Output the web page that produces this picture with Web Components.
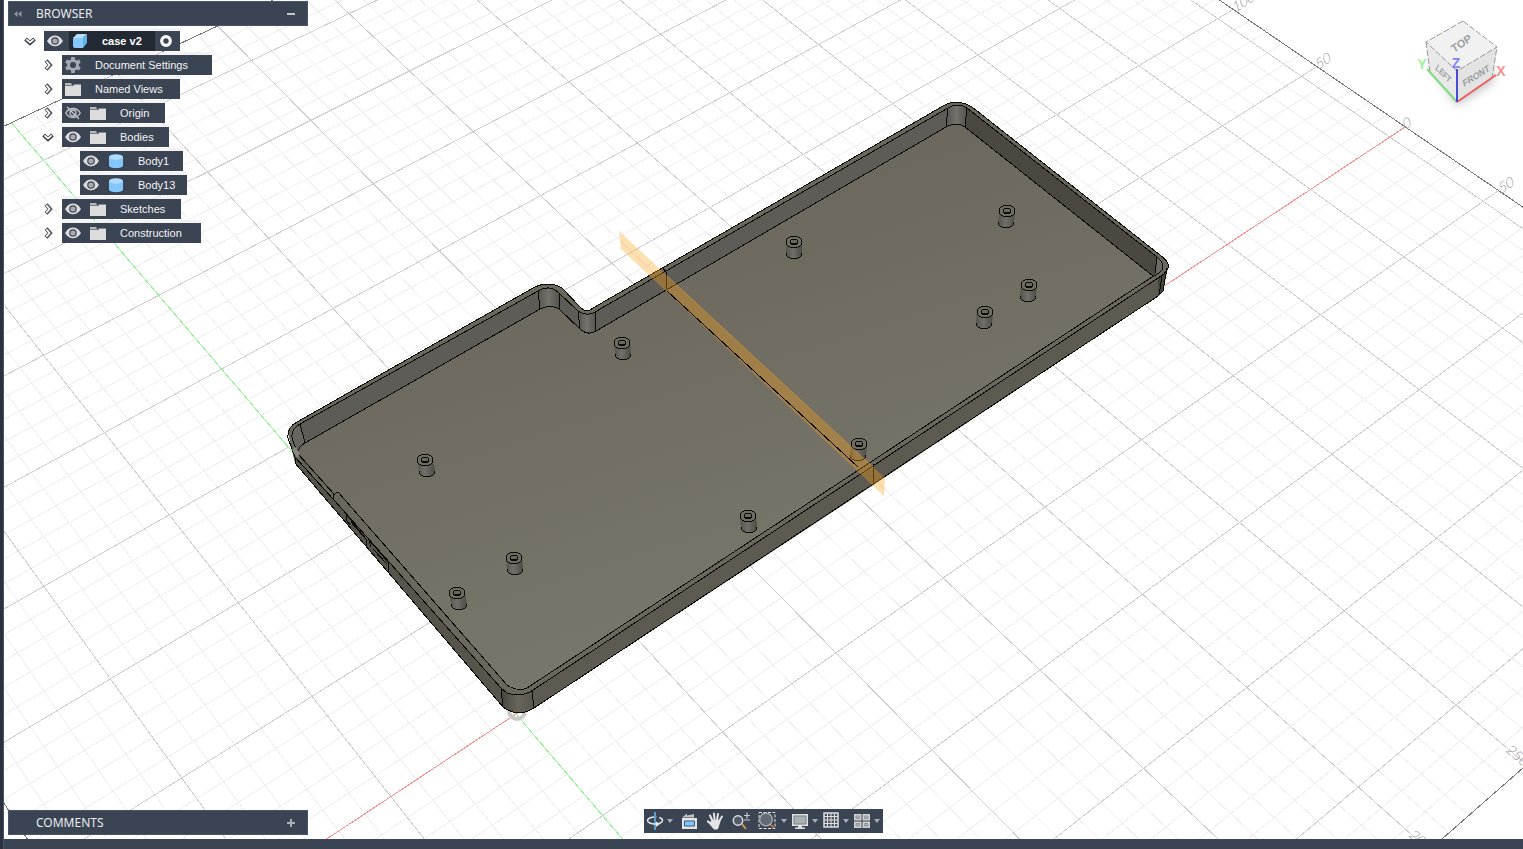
<!DOCTYPE html>
<html lang="en">
<head>
<meta charset="utf-8">
<title>case v2</title>
<style>
html,body{margin:0;height:100%}
body{font-family:"Liberation Sans",Arial,sans-serif;background:#fff;overflow:hidden}
</style>
</head>
<body>
<cad-app></cad-app>
<script>
const define = (name, html, setup) => customElements.define(name, class extends HTMLElement {
  connectedCallback() {
    if (this.shadowRoot) return;
    const t = document.createElement('template');
    t.innerHTML = html;
    this.attachShadow({mode: 'open'}).append(t.content.cloneNode(true));
    if (setup) setup.call(this, this.shadowRoot);
  }
});

/* ---------- icons ---------- */
const ICONS = {
  eye: '<svg width="16" height="16"><path d="M0 8C3 3.2 5.500 2.500 8 2.500S13 3.200 16 8C13 12.500 10.500 13.200 8 13.200S3 12.500 0 8Z" fill="#dcdcdc"/><circle cx="8" cy="8" r="3.800" fill="#3b4453"/><circle cx="8" cy="8" r="2.600" fill="#a9abb0"/></svg>',
  hidden: '<svg width="16" height="16" fill="none" stroke="#c3c6cb" stroke-width="1.300"><path d="M.8 8C4 2 12 2 15.200 8C12 14 4 14 .8 8Z"/><circle cx="8" cy="8" r="3"/><path d="M2 2L14 14"/></svg>',
  folder: '<svg width="16" height="16"><path d="M0 2h6l1.500 2.500H0Z" fill="#b4b7b5"/><path d="M0 5h8l1-1.500h7V15H0Z" fill="#dcdcdc"/></svg>',
  gear: '<svg width="16" height="16"><g fill="#a5a9b2"><circle cx="8" cy="8" r="5.800"/><path d="M6.300 0h3.400l.6 4H5.700ZM5.700 12h4.600l-.6 4H6.300Z"/><path d="M6.300 0h3.400l.6 4H5.700ZM5.700 12h4.600l-.6 4H6.300Z" transform="rotate(60 8 8)"/><path d="M6.300 0h3.400l.6 4H5.700ZM5.700 12h4.600l-.6 4H6.300Z" transform="rotate(120 8 8)"/></g><circle cx="8" cy="8" r="3" fill="#3b4453"/></svg>',
  cube: '<svg width="16" height="16"><path d="M1 5L5 1h10l-4 4Z" fill="#b5defc"/><path d="M1 5h10v10H3q-2 0-2-2Z" fill="#87c9fb"/><path d="M11 5l4-4v9l-4 5Z" fill="#62aee9"/></svg>',
  cylinder: '<svg width="16" height="16"><path d="M1 4v8.500C1 16 15 16 15 12.500V4Z" fill="#85c7fa"/><ellipse cx="8" cy="4" rx="7" ry="2.800" fill="#aedbff"/></svg>',
  target: '<svg width="16" height="16"><circle cx="8" cy="8" r="4.300" fill="none" stroke="#fff" stroke-width="3.200"/></svg>',
  right: '<svg width="12" height="12" fill="none"><path d="M4 1.500L8 6l-4 4.500" stroke="#50555d" stroke-width="4"/><path d="M4.300 2.300L7.500 6l-3.200 3.700" stroke="#fafafa" stroke-width="1.700"/></svg>',
  down: '<svg width="12" height="12" fill="none"><path d="M1.500 4L6 8l4.500-4" stroke="#3f444c" stroke-width="4"/><path d="M2.300 4.300L6 7.500l3.700-3.200" stroke="#fafafa" stroke-width="1.700"/></svg>',
  collapse: '<svg width="8" height="8"><path d="M3.500 1v6L0 4ZM7.500 1v6L4 4Z" fill="#8d98a9"/></svg>',
  minus: '<svg width="8" height="8"><path d="M0 3h8v2H0Z" fill="#c3c7ce"/></svg>',
  plus: '<svg width="8" height="8"><path d="M0 3h8v2H0ZM3 0h2v8H3Z" fill="#aab0ba"/></svg>',
  caret: '<svg width="6" height="4"><path d="M0 0h6L3 4Z" fill="#a6adb9"/></svg>',
  orbit: '<svg width="18" height="18"><path d="M9 0v18" stroke="#5e9cc8" stroke-width="2"/><ellipse cx="9" cy="8.500" rx="7.500" ry="3.600" fill="none" stroke="#e6e6e6" stroke-width="1.500" stroke-dasharray="28 3"/><path d="M9 3v5" stroke="#5e9cc8" stroke-width="2"/><path d="M10 9.500l4 2.500-4 3Z" fill="#e6e6e6"/></svg>',
  look: '<svg width="18" height="18"><path d="M2 5.500L7 1.500v2L14 2v3.500Z" fill="#bfc1c2"/><path d="M2 6h15v11H2Z" fill="#e4e4e4"/><path d="M4.500 9h10v5h-10Z" fill="#83c8fb" stroke="#34577a"/></svg>',
  hand: '<svg width="18" height="18" fill="none" stroke="#e4e4e4" stroke-linecap="round"><path d="M6.500 9L4 3.500M8.500 8L8 1.500M11 8l1-6M13 9.500l3-5" stroke-width="2"/><path d="M6 13L2 9.500" stroke-width="2.300"/><path d="M6 8.500h7l1 1-1.500 4.500-1 3H8l-4-5Z" fill="#e4e4e4" stroke-width="1"/></svg>',
  zoom: '<svg width="18" height="18" fill="none"><path d="M10 12l4 5" stroke="#d59a4f" stroke-width="2"/><circle cx="6" cy="8.500" r="4.700" fill="#525b69" stroke="#dfdfdf" stroke-width="1.500"/><path d="M12 3.500h6M15 .5v6M12 8h6" stroke="#c8cbd0" stroke-width="1.200"/></svg>',
  fit: '<svg width="18" height="18" fill="none"><path d="M1 .5h16v16H1Z" stroke="#e5e5e5" stroke-dasharray="3 1.500"/><path d="M12 12l4 4" stroke="#a9783f" stroke-width="2"/><circle cx="8" cy="7.500" r="6.300" fill="#626a76" stroke="#abb0b6" stroke-width="1.300"/></svg>',
  display: '<svg width="18" height="18"><path d="M1 2h16v12H1Z" fill="#dedede"/><path d="M3 4h12v8H3Z" fill="#a9b3b1" stroke="#777f85"/><path d="M7 14h4v1.500h3V17H4v-1.500h3Z" fill="#dedede"/></svg>',
  grid: '<svg width="18" height="18"><path d="M2 1h14v14H2Z" fill="#4b5462" stroke="#dedede" stroke-width="1.500"/><path d="M5.500 1v14M9 1v14M12.500 1v14M2 4.500h14M2 8h14M2 11.500h14" stroke="#dedede" fill="none"/></svg>',
  split: '<svg width="18" height="18"><path d="M1 2h7.500v6.500H1ZM9.500 2H17v6.500H9.500ZM1 9.500h7.500V16H1ZM9.500 9.500H17V16H9.500Z" fill="#cfd0d0"/><path d="M3 4h3.500v2.500H3ZM11.500 4H15v2.500h-3.500ZM3 11.500h3.500V14H3ZM11.500 11.500H15V14h-3.500Z" fill="#aeb3b7" stroke="#8d949b"/></svg>'
};
define('cad-icon', '<style>:host{display:inline-flex;flex:none}svg{display:block}</style>', function (root) {
  root.append(document.createRange().createContextualFragment(ICONS[this.getAttribute('name')]));
});

/* ---------- panel header ---------- */
define('cad-panel', `<style>
:host{display:block;width:300px}
header{box-sizing:border-box;height:25px;display:flex;align-items:center;background:#3b4453;border:1px solid #49566a;color:#e9ebee;padding:0 12px 0 5px}
h2{font:12px/16px "Noto Sans",sans-serif;margin:0;flex:1}
button{border:0;background:none;padding:0;display:flex;width:8px}
.lead{width:22px}
</style><header><button class="lead" aria-label="Collapse panel"></button><h2><slot></slot></h2><button class="toggle" aria-label="Toggle panel"></button></header>`, function (root) {
  if (this.hasAttribute('collapsible')) root.querySelector('.lead').innerHTML = '<cad-icon name="collapse"></cad-icon>';
  root.querySelector('.toggle').innerHTML = `<cad-icon name="${this.getAttribute('toggle')}"></cad-icon>`;
});

/* ---------- browser tree ---------- */
define('tree-row', `<style>
:host{display:flex;align-items:center;height:20px;font-size:11px;line-height:20px;color:#f2f3f4}
.exp{flex:none;width:20px;padding:0;border:0;background:none;display:flex;height:12px;align-items:center}
.row{box-sizing:border-box;flex:none;width:var(--w);height:20px;display:flex;align-items:center;gap:9px;padding-left:3px;background:#3b4453;box-shadow:0 -3px 0 rgba(238,236,240,.7)}
.row button{border:0;background:none;padding:0;display:flex}
.label{display:flex;align-items:center;gap:14px}
:host([active]) .row{gap:6px}
:host([active]) .label{box-sizing:border-box;background:#222933;height:20px;width:86px;padding-left:3px;font-weight:bold;color:#fff}
:host([active]) .target{margin-left:-3px}
</style><button class="exp"></button><div class="row"><span class="label"><slot></slot></span></div>`, function (root) {
  const row = root.querySelector('.row'), exp = root.querySelector('.exp');
  const a = n => this.getAttribute(n);
  row.style.setProperty('--w', a('width') + 'px');
  if (a('state')) { exp.innerHTML = `<cad-icon name="${a('state')}"></cad-icon>`; exp.setAttribute('aria-label', 'Expand'); }
  else { exp.disabled = true; exp.setAttribute('aria-hidden', 'true'); }
  if (a('eye')) row.insertAdjacentHTML('afterbegin', `<button aria-label="Show or hide"><cad-icon name="${a('eye')}"></cad-icon></button>`);
  root.querySelector('.label').insertAdjacentHTML('afterbegin', `<cad-icon name="${a('icon')}"></cad-icon>`);
  if (this.hasAttribute('active')) row.insertAdjacentHTML('beforeend', '<button class="target" aria-label="Activate component"><cad-icon name="target"></cad-icon></button>');
});
define('browser-tree', `<style>
:host{display:block;padding-left:16px}
ul{list-style:none;margin:0;padding:0 0 0 18px;display:flex;flex-direction:column;gap:4px}
ul.top{padding:0}
li{display:flex;flex-direction:column;gap:4px}
</style>
<ul class="top"><li><tree-row active state="down" eye="eye" icon="cube" width="136">case v2</tree-row>
<ul>
<li><tree-row state="right" icon="gear" width="150">Document Settings</tree-row></li>
<li><tree-row state="right" icon="folder" width="118">Named Views</tree-row></li>
<li><tree-row state="right" eye="hidden" icon="folder" width="103">Origin</tree-row></li>
<li><tree-row state="down" eye="eye" icon="folder" width="107">Bodies</tree-row>
<ul><li><tree-row eye="eye" icon="cylinder" width="103">Body1</tree-row></li>
<li><tree-row eye="eye" icon="cylinder" width="107">Body13</tree-row></li></ul></li>
<li><tree-row state="right" eye="eye" icon="folder" width="119">Sketches</tree-row></li>
<li><tree-row state="right" eye="eye" icon="folder" width="139">Construction</tree-row></li>
</ul></li></ul>`);

/* ---------- navigation bar ---------- */
define('nav-bar', `<style>
:host{display:flex;height:24px;background:#3b4453;padding-right:1px}
button{border:0;background:none;padding:0;width:24px;height:24px;display:flex;align-items:center;justify-content:center}
.caret{width:10px}
.wide{width:28px}
.slim{width:21px}
</style>
<button class="slim" aria-label="Orbit"><cad-icon name="orbit"></cad-icon></button><button class="caret" aria-label="Orbit options"><cad-icon name="caret"></cad-icon></button>
<button class="wide" aria-label="Look at"><cad-icon name="look"></cad-icon></button>
<button aria-label="Pan"><cad-icon name="hand"></cad-icon></button>
<button class="wide" aria-label="Zoom"><cad-icon name="zoom"></cad-icon></button>
<button aria-label="Fit"><cad-icon name="fit"></cad-icon></button><button class="caret" aria-label="Fit options"><cad-icon name="caret"></cad-icon></button>
<button class="slim" aria-label="Display settings"><cad-icon name="display"></cad-icon></button><button class="caret" aria-label="Display options"><cad-icon name="caret"></cad-icon></button>
<button class="slim" aria-label="Grid and snaps"><cad-icon name="grid"></cad-icon></button><button class="caret" aria-label="Grid options"><cad-icon name="caret"></cad-icon></button>
<button class="slim" aria-label="Viewports"><cad-icon name="split"></cad-icon></button><button class="caret" aria-label="Viewport options"><cad-icon name="caret"></cad-icon></button>`);

/* ---------- 3D view ---------- */
define('model-view', `<style>
:host{display:block;min-width:0;min-height:0}
svg{display:block;width:100%;height:100%}
text{font-family:"Liberation Sans",Arial,sans-serif}
.num{font-size:14px;fill:#9a9a9a}
.num text{font-family:Lato,sans-serif;font-weight:300}
.e{fill:none;stroke:#0b0b0a;stroke-width:1;shape-rendering:crispEdges}
.g{fill:none;shape-rendering:crispEdges}
</style>
<svg viewBox="4 0 1519 839" preserveAspectRatio="xMidYMid slice" role="img" aria-label="Case model on the ground grid">
<defs>
<linearGradient id="floor" gradientUnits="userSpaceOnUse" x1="560" y1="200" x2="700" y2="640"><stop offset="0" stop-color="#6a665b"/><stop offset="1" stop-color="#79766b"/></linearGradient>
<linearGradient id="post"><stop offset="0" stop-color="#55534d"/><stop offset=".45" stop-color="#706f69"/><stop offset="1" stop-color="#4b4a45"/></linearGradient>
<linearGradient id="bend"><stop offset="0" stop-color="#55544f"/><stop offset=".5" stop-color="#73726d"/><stop offset="1" stop-color="#55534e"/></linearGradient>
<linearGradient id="corner"><stop offset="0" stop-color="#45433c"/><stop offset=".5" stop-color="#68655c"/><stop offset="1" stop-color="#58554c"/></linearGradient>
<filter id="soft" x="-50%" y="-50%" width="200%" height="200%"><feGaussianBlur stdDeviation="5"/></filter>
</defs>
<g id="grid" class="g"></g>
<g class="num">
<text transform="translate(1235,13) rotate(-33) skewX(-16)">100</text>
<text transform="translate(1318,70) rotate(-33) skewX(-16)">50</text>
<text transform="translate(1405,130) rotate(-33) skewX(-16)">0</text>
<text transform="translate(1501,194) rotate(-33) skewX(-16)">50</text>
<text transform="translate(1505,751) rotate(41) skewX(-8)">250</text>
<text transform="translate(1408,836) rotate(41) skewX(-8)">200</text>
</g>
<circle cx="517" cy="711" r="8" fill="none" stroke="#c9c9c9" stroke-width="4"/>
<!-- case silhouette -->
<path fill="#57544b" d="M288 432Q289 427 297 422L533 288Q548 280 562 288L580 307Q587 314 593 308L943 106Q957 98 972 107L1160 255Q1168 261 1168 266L1163 291L1158 296L837 509L534 708Q518 718 503 707L295 463L293 455Z"/>
<path fill="url(#corner)" d="M501 688Q518 700 532 691L534 708Q518 718 503 707Z"/>
<path fill="#5d5a51" d="M532 691L1158 278L1158 296L534 708Z"/>
<path fill="#47443d" d="M1158 278L1168 266L1163 291L1158 296Z"/>
<!-- rim -->
<path fill="#6a675c" d="M288 432Q289 427 297 422L533 288Q548 280 562 288L580 307Q587 314 593 308L943 106Q957 98 972 107L1160 255Q1172 264 1167 270Q1165 274 1158 278L530 692Q518 697 507 693L501 688L334 500L295 457Z"/>
<!-- inner walls -->
<path fill="#5e5c57" d="M292 437Q292 429 300 424L538 291Q550 284 559 293L578 311Q587 317 595 312L948 108Q957 102 967 108L965 130L946 140L596 350L540 330L305 470L298 451Z"/>
<path fill="#4b4842" d="M967 108L1157 257Q1165 263 1162 270L1153 277L964 130Z"/>
<path fill="#6b6a64" d="M1157 257Q1165 263 1162 270L1156 275Z"/>
<path fill="url(#bend)" d="M538 291Q549 285 559 293V309L548 312L540 309Z"/>
<path fill="url(#bend)" d="M578 311Q587 317 595 312L596 331Q588 336 580 329Z"/>
<path fill="url(#bend)" d="M948 108Q957 102 967 108L965 127L946 127Z"/>
<path fill="#67655f" d="M292 437Q292 429 300 424L305 443L298 451Z"/>
<!-- floor -->
<path fill="url(#floor)" d="M298 451Q299 447 305 443L540 309Q550 304 559 309L580 329Q588 336 596 331L946 127Q957 121 965 127L1153 276L527 688Q517 692 507 685L338 492L334 494L300 454Z"/>
<g class="e">
<path d="M295 457L288 438Q287 427 297 422L533 288Q548 280 562 288L580 307Q587 314 593 308L943 106Q957 98 972 107L1160 255Q1172 264 1167 270Q1165 274 1158 278L530 692Q518 697 507 693L501 688L334 500L295 457V463L503 707Q518 718 534 708L1158 296L1163 291L1167 268"/>
<path d="M298 451Q291 440 292 435Q292 429 300 424L538 291Q550 284 559 293L578 311Q587 317 595 312L948 108Q957 102 967 108L1157 257Q1165 263 1162 270Q1160 273 1152 277L527 688Q517 692 507 685L338 492L333 495L334 500M334 494L298 454"/>
<path d="M298 451Q299 447 305 443L540 309Q550 304 559 309L580 329Q588 336 596 331L946 127Q957 121 965 127L1153 276"/>
<path d="M300 424l5 19M538 291l2 18M559 293v16M578 311l2 18M595 312l1 19M666 272v18M948 108l-2 19M967 108l-2 19M1157 257l-2 16M1162 276l-3 19M501 688l2 19M532 691l2 17M874 464l-1 21M663 268l3 4"/>
<path d="M346 514L366 539L367 546M346 514L347 521L350 525M351 522L364 537M369 540L388 562L389 572M369 540L371 547M373 549L387 564"/>
</g>
<path d="M292 450l4-3 4 7-3 4Z" fill="#8b8882"/>
<g id="posts"></g>
<!-- construction plane -->
<path fill="#fda014" fill-opacity=".34" d="M619 231L885 478L884 496L621 249Z"/>
<path class="e" d="M667 291L858 467"/>
<path fill="none" stroke="#d29a3c" stroke-opacity=".5" d="M667 276L874 468"/>
<!-- view cube -->
<path d="M1430 66L1457 106L1494 82L1490 60Z" fill="#777" opacity=".4" filter="url(#soft)"/>
<path d="M1463 21L1426 42L1457 71L1497 47Z" fill="#f1f1f1"/>
<path d="M1426 42L1457 71V102L1430 72Z" fill="#e9e9e9"/>
<path d="M1457 71L1497 47L1492 78L1457 102Z" fill="#e3e3e3"/>
<path d="M1463 21L1426 42L1457 71L1497 47ZM1426 42L1430 72L1457 102L1492 78L1497 47" fill="none" stroke="#999" stroke-dasharray="6 2"/>
<g fill="#9c9ea3" font-weight="bold">
<text font-size="11" transform="translate(1454,53) rotate(-34) skewX(-4)">TOP</text>
<text font-size="9" transform="translate(1464,87) rotate(-32) skewX(-14)">FRONT</text>
<text font-size="8" transform="translate(1435,69) rotate(46) skewX(16)">LEFT</text>
</g>
<g fill="none" stroke-width="2"><path d="M1427 69L1457 102" stroke="#7fdc7f"/><path d="M1457 102L1496 75" stroke="#ee6060"/><path d="M1457 69V102" stroke="#4a4ad8"/></g>
<g font-size="14" font-weight="bold" text-anchor="middle"><text x="1422" y="69" fill="#9af59a">Y</text><text x="1501" y="76" fill="#f59090">X</text><text x="1456" y="68" fill="#8585f0">Z</text></g>
</svg>`, function (root) {
  /* ground plane to view, one unit = 50 mm */
  const project = (x, y) => {
    const w = 1 + .02806 * x + .0343 * y;
    return [(516 + 136.1 * x - 66 * y) / w, (714 - 60.25 * x - 73.6 * y) / w].map(v => v.toFixed(1)).join(' ');
  };
  const line = (a, b, c, d) => `M${project(a, b)}L${project(c, d)}`;
  const X0 = -3, X1 = 9.2, Y0 = -4.6, Y1 = 7.6;
  let minor = '', major = '';
  for (let i = -15; i <= 46; i++) {
    if (i % 5) minor += line(i / 5, Y0, i / 5, Y1); else if (i) major += line(i / 5, Y0, i / 5, Y1);
  }
  for (let i = -23; i <= 38; i++) {
    if (i % 5) minor += line(X0, i / 5, X1, i / 5); else if (i) major += line(X0, i / 5, X1, i / 5);
  }
  root.getElementById('grid').innerHTML =
    `<path d="${minor}" stroke="#efefef"/><path d="${major}" stroke="#d0d0d0"/>` +
    `<path d="${line(X0, Y0, X0, Y1) + line(X1, Y0, X1, Y1) + line(X0, Y0, X1, Y0) + line(X0, Y1, X1, Y1)}" stroke="#777777"/>` +
    `<path d="${line(X0, 0, X1, 0)}" stroke="#ff8f8f"/><path d="${line(0, Y0, 0, Y1)}" stroke="#8ff58f"/>`;
  const posts = [[1007,211,-1],[794,242,0],[622,343,1],[1029,285,-1],[985,312,-1],[859,444,-1],[425,460,2],[748,516,1],[514,558,1],[457,593,2]];
  root.getElementById('posts').innerHTML = posts.map(([x, y, d]) => `<g transform="translate(${x},${y})">
<path d="M-8 0L${d - 8} 11A8 6 0 0 0 ${d + 8} 11L8 0Z" fill="url(#post)"/><path class="e" d="M${d - 8} 11A8 6 0 0 0 ${d + 8} 11"/>
<ellipse rx="8" ry="6" fill="#6e6b61"/><ellipse rx="8" ry="6" class="e"/><ellipse rx="4" ry="3" class="e" style="fill:#6a675e"/><path class="e" d="M-3 1h6"/></g>`).join('');
});

/* ---------- shell ---------- */
define('cad-app', `<style>
:host{display:grid;grid-template:minmax(0,1fr) 10px / 4px minmax(0,1fr);height:100vh}
.rail{box-sizing:border-box;grid-row:1/3;background:#2b313d;border-right:1px solid #4a5567}
main{display:grid;grid-template:minmax(0,1fr) / minmax(0,1fr);min-width:0}
main>*{grid-area:1/1}
aside{display:flex;flex-direction:column;gap:5px;justify-self:start;padding:1px 0 4px 4px}
.fill{flex:1}
nav-bar{align-self:end;justify-self:center;margin-bottom:6px}
footer{background:#3b4453;grid-column:2}
</style>
<div class="rail"></div>
<main><model-view></model-view>
<aside><cad-panel collapsible toggle="minus">BROWSER</cad-panel><browser-tree class="fill"></browser-tree><cad-panel toggle="plus">COMMENTS</cad-panel></aside>
<nav-bar></nav-bar></main>
<footer></footer>`);
</script>
</body>
</html>
